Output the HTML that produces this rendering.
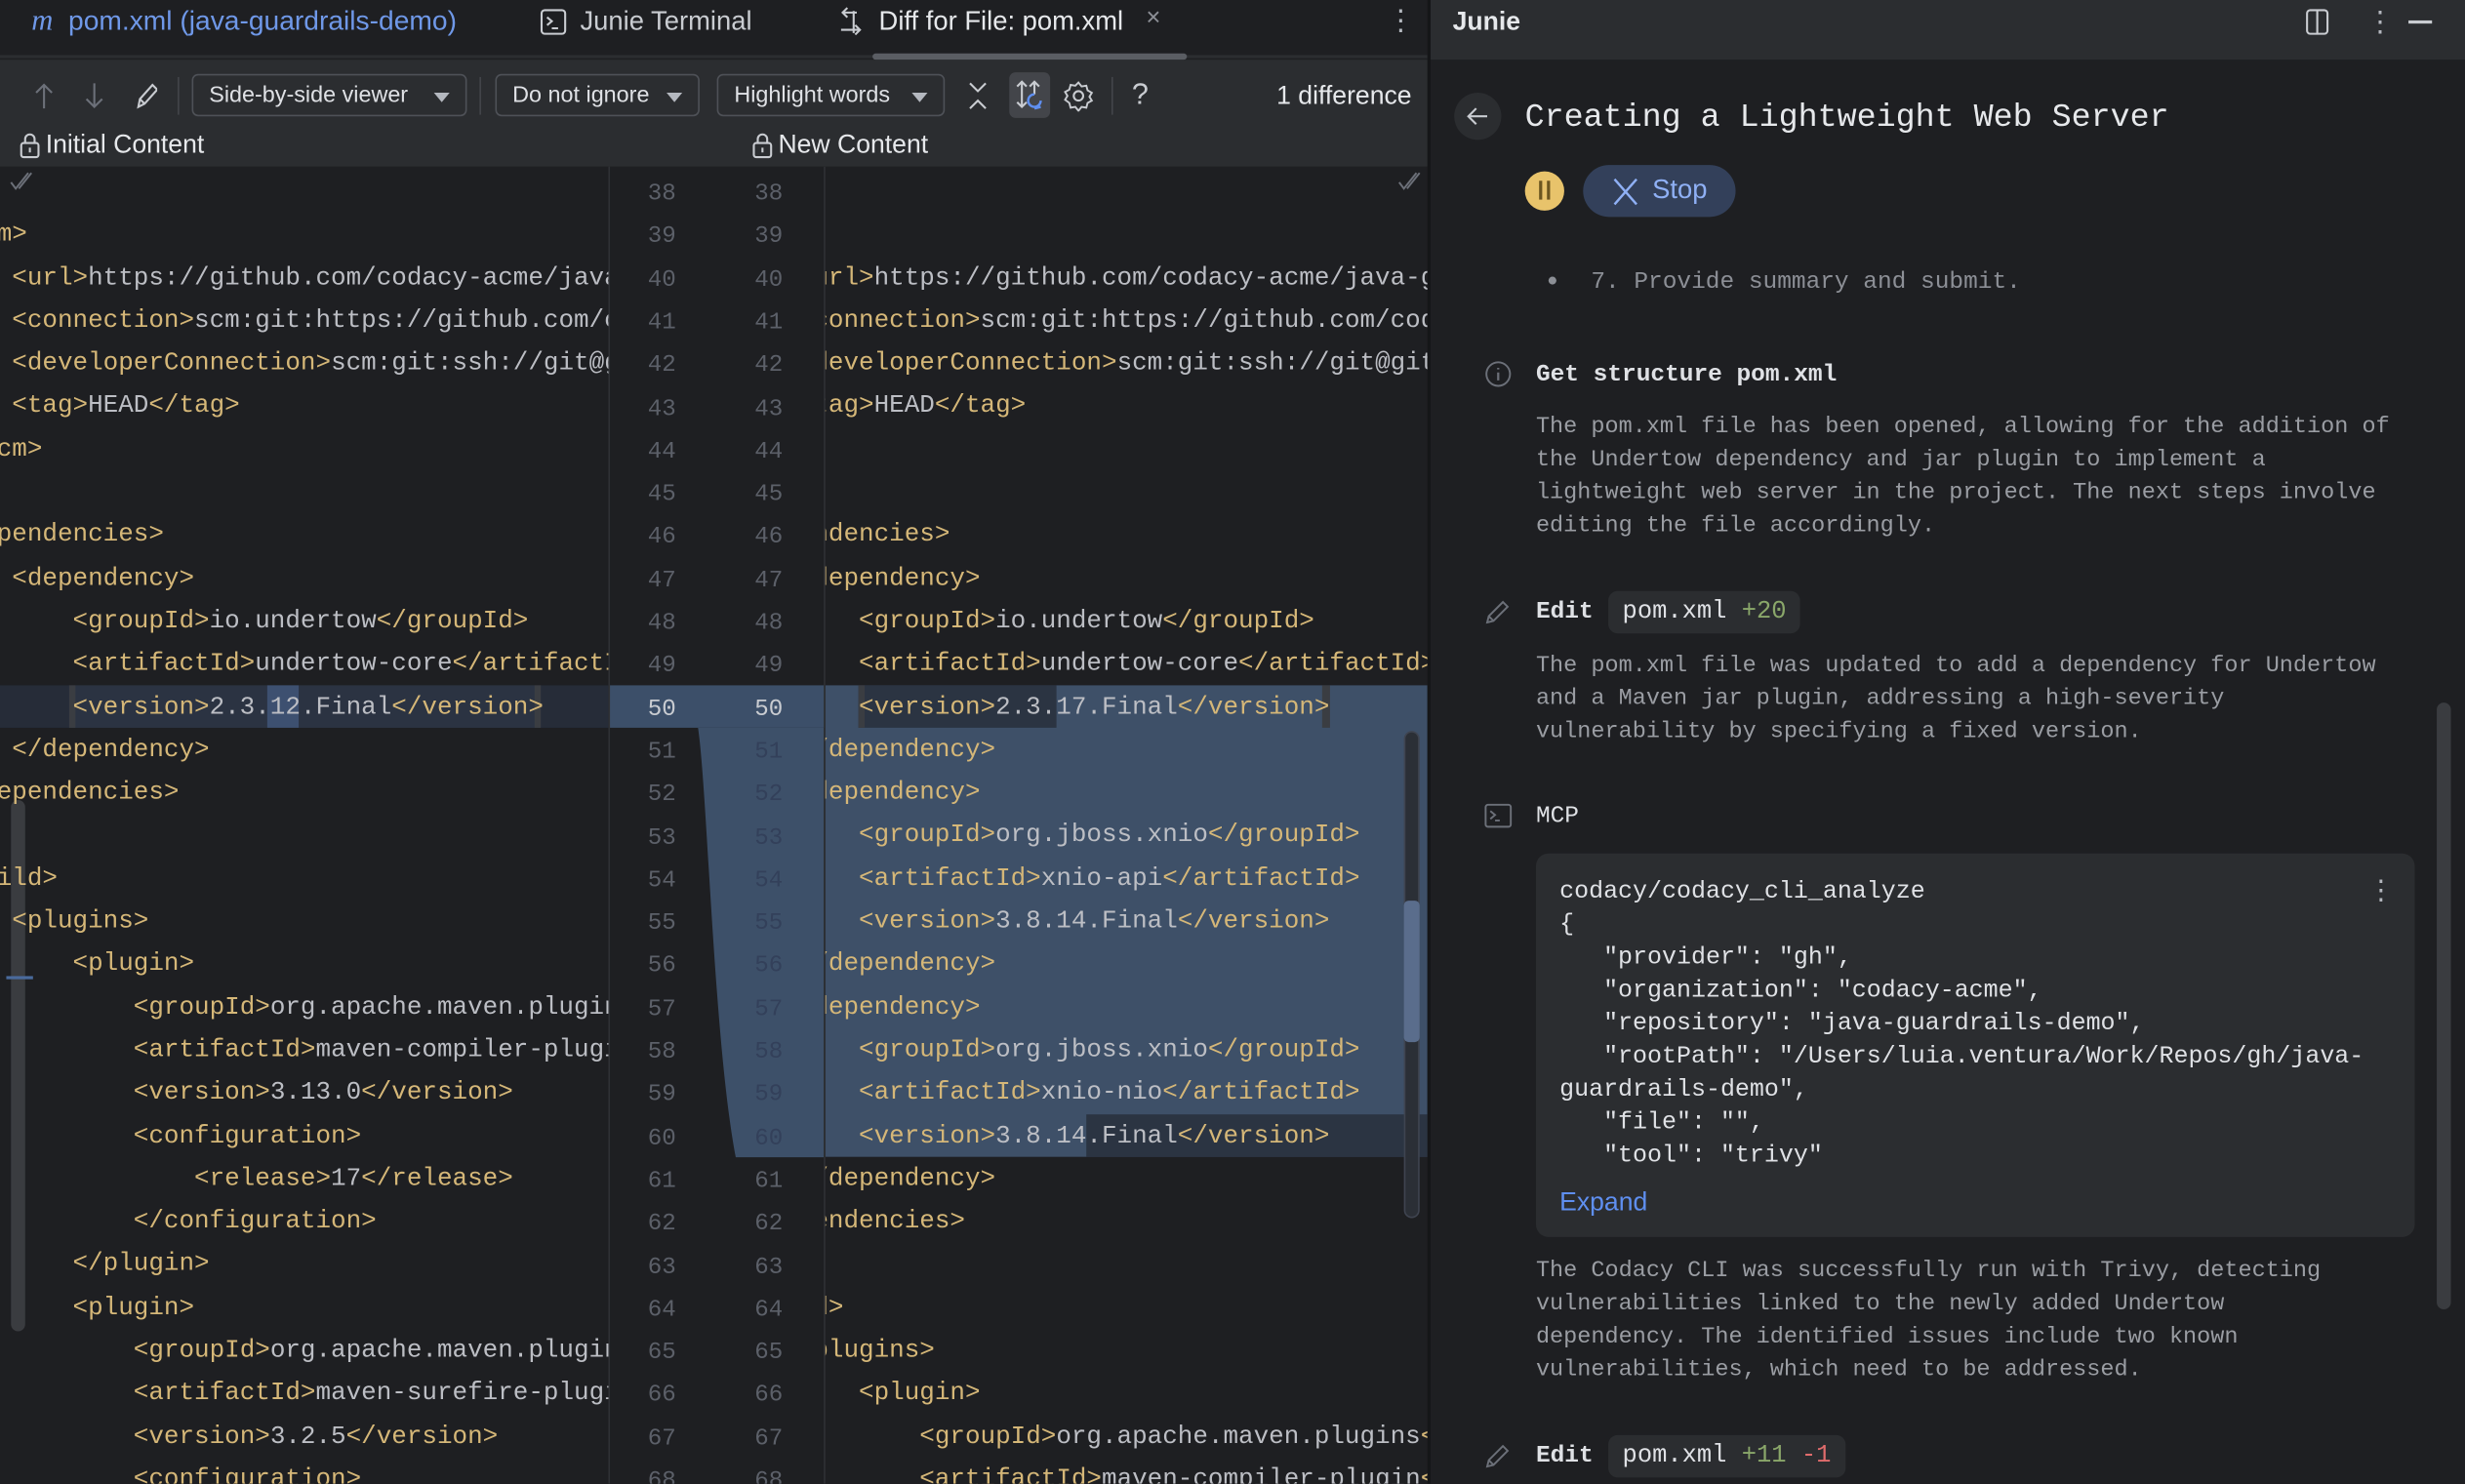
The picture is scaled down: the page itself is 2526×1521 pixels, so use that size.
<!DOCTYPE html>
<html><head><meta charset="utf-8"><style>
*{margin:0;padding:0;box-sizing:border-box}
html,body{width:2526px;height:1520px;overflow:hidden;background:#1e1f22}
#r{position:absolute;left:0;top:0;width:1568px;height:944px;transform:scale(1.6110);transform-origin:0 0;background:#1e1f22;font-family:"Liberation Sans",sans-serif;color:#dfe1e5;overflow:hidden}
.a{position:absolute}
.m{font-family:"Liberation Mono",monospace}
pre{font-family:"Liberation Mono",monospace;font-size:16.1px;line-height:27.3px;color:#bcbec4;position:absolute;white-space:pre}
b{font-weight:normal;color:#d5b778}
.num{position:absolute;font-family:"Liberation Mono",monospace;font-size:15px;line-height:27.3px;color:#5c6069;text-align:center;width:40px}
.dd{position:absolute;top:47px;height:27px;border:1px solid #4e5157;border-radius:4px;font-size:14.5px;line-height:27px;padding-left:10px;color:#dfe1e5}
.dd:after{content:"";position:absolute;right:10px;top:11px;border-left:5px solid transparent;border-right:5px solid transparent;border-top:6px solid #b4b8bf}
.jt{font-family:"Liberation Mono",monospace;font-size:14.6px;color:#9a9da3;line-height:21px;position:absolute;left:977px;white-space:nowrap}
.hd{font-family:"Liberation Mono",monospace;font-size:15.2px;color:#dfe1e5;position:absolute;left:977px;font-weight:bold}
.chip{position:absolute;left:1023px;height:27px;background:#2b2d30;border-radius:6px;font-family:"Liberation Mono",monospace;font-size:15.8px;line-height:27px;padding:0 9px;color:#dfe1e5}
</style></head><body><div id="r">

<!-- tab bar -->
<div class="a" style="left:0;top:0;width:908px;height:38px;background:#1e1f22"></div>
<div class="a" style="left:0;top:35px;width:908px;height:2px;background:#2b2d30"></div>
<div class="a" style="left:555px;top:34px;width:200px;height:4px;background:#5a5d63;border-radius:2px"></div>
<div class="a" style="left:20px;top:3px;font-size:17.5px;color:#6f98e8;white-space:nowrap"><i style="font-family:'Liberation Serif',serif;font-size:19px">m</i>&nbsp;&nbsp;pom.xml (java-guardrails-demo)</div>
<svg class="a" style="left:343px;top:5px" width="18" height="18" viewBox="0 0 18 18"><rect x="1.5" y="1.5" width="15" height="15" rx="2" fill="none" stroke="#c9ccd1" stroke-width="1.3"/><path d="M5 6l3 2.5-3 2.5M8 13h4" fill="none" stroke="#c9ccd1" stroke-width="1.3"/></svg>
<div class="a" style="left:369px;top:4px;font-size:17px;color:#c9ccd1">Junie Terminal</div>
<svg class="a" style="left:531px;top:3px" width="22" height="22" viewBox="0 0 22 22"><path d="M8 2L5 5l3 3M5 5h9M13 13l3 3-3 3M16 16H4M12 4v14" fill="none" stroke="#c9ccd1" stroke-width="1.3"/></svg>
<div class="a" style="left:559px;top:4px;font-size:17px;color:#e6e8eb">Diff for File: pom.xml</div>
<div class="a" style="left:729px;top:3px;font-size:16px;color:#8c8f96">×</div>
<div class="a" style="left:882px;top:4px;font-size:18px;color:#b4b8bf;line-height:18px;width:4px">⋮</div>

<!-- toolbar -->
<div class="a" style="left:0;top:38px;width:908px;height:68px;background:#2b2d30"></div>
<svg class="a" style="left:20px;top:51px" width="80" height="20" viewBox="0 0 80 20"><path d="M8 3v15M3 8l5-5 5 5" fill="none" stroke="#6c7079" stroke-width="1.3"/><path d="M40 2v15M35 12l5 5 5-5" fill="none" stroke="#6c7079" stroke-width="1.3"/><path d="M68 17l1-5 8-9 3 3-8 9z M69 12l3 3" fill="none" stroke="#c9ccd1" stroke-width="1.3"/></svg>
<div class="a" style="left:113px;top:49px;width:1px;height:24px;background:#43454a"></div>
<div class="dd" style="left:122px;width:175px">Side-by-side viewer</div>
<div class="a" style="left:305px;top:49px;width:1px;height:24px;background:#43454a"></div>
<div class="dd" style="left:315px;width:130px">Do not ignore</div>
<div class="dd" style="left:456px;width:145px">Highlight words</div>
<svg class="a" style="left:613px;top:51px" width="18" height="20" viewBox="0 0 18 20"><path d="M4 2l5 5 5-5M4 18l5-5 5 5" fill="none" stroke="#c9ccd1" stroke-width="1.3"/></svg>
<div class="a" style="left:642px;top:46px;width:26px;height:29px;background:#43454a;border-radius:4px"></div>
<svg class="a" style="left:645px;top:49px" width="20" height="24" viewBox="0 0 20 24"><path d="M5 3v16M2 6l3-3 3 3M2 16l3 3 3-3M13 3v8M10 6l3-3 3 3" fill="none" stroke="#c9ccd1" stroke-width="1.3"/><path d="M17 15a4 4 0 1 1-4-4M13 20l4-1" fill="none" stroke="#5f8ff0" stroke-width="1.5"/></svg>
<svg class="a" style="left:676px;top:51px" width="20" height="20" viewBox="0 0 20 20"><circle cx="10" cy="10" r="3" fill="none" stroke="#c9ccd1" stroke-width="1.3"/><path d="M10 1.5l2 2.5 3-.5.8 3 2.7 1.5-1.5 2.5 1.5 2.5-2.7 1.5-.8 3-3-.5-2 2.5-2-2.5-3 .5-.8-3L1.5 12.5 3 10 1.5 7.5l2.7-1.5.8-3 3 .5z" fill="none" stroke="#c9ccd1" stroke-width="1.2"/></svg>
<div class="a" style="left:707px;top:49px;width:1px;height:24px;background:#43454a"></div>
<div class="a" style="left:720px;top:50px;font-size:19px;color:#c9ccd1">?</div>
<div class="a" style="left:812px;top:52px;font-size:16.5px;color:#e6e8eb">1 difference</div>

<!-- header row -->
<svg class="a" style="left:12px;top:84px" width="14" height="17" viewBox="0 0 14 17"><rect x="1.5" y="7" width="11" height="9" rx="1.5" fill="none" stroke="#c9ccd1" stroke-width="1.3"/><path d="M4 7V4.5a3 3 0 0 1 6 0V7M7 10v3" fill="none" stroke="#c9ccd1" stroke-width="1.3"/></svg>
<div class="a" style="left:29px;top:83px;font-size:16.5px;color:#e6e8eb">Initial Content</div>
<svg class="a" style="left:478px;top:84px" width="14" height="17" viewBox="0 0 14 17"><rect x="1.5" y="7" width="11" height="9" rx="1.5" fill="none" stroke="#c9ccd1" stroke-width="1.3"/><path d="M4 7V4.5a3 3 0 0 1 6 0V7M7 10v3" fill="none" stroke="#c9ccd1" stroke-width="1.3"/></svg>
<div class="a" style="left:495px;top:83px;font-size:16.5px;color:#e6e8eb">New Content</div>

<!-- editor areas -->
<div class="a" style="left:0;top:106px;width:908px;height:838px;background:#1e1f22"></div>
<div class="a" style="left:387px;top:106px;width:1px;height:838px;background:#2f3135"></div>
<div class="a" style="left:524px;top:106px;width:1px;height:838px;background:#2f3135"></div>

<!-- left pane -->
<div class="a" style="left:0;top:106px;width:387px;height:838px;overflow:hidden">
 <div class="a" style="left:0;top:330px;width:387px;height:27.3px;background:#262c38"></div>
 <div class="a" style="left:44px;top:330px;width:300px;height:27.3px;background:#2b3342"></div>
 <div class="a" style="left:44px;top:330px;width:4px;height:27.3px;background:#3a3d42"></div>
 <div class="a" style="left:340px;top:330px;width:4px;height:27.3px;background:#3a3d42"></div>
 <div class="a" style="left:170px;top:330px;width:20px;height:27.3px;background:#3d5070"></div>
 <div class="a" style="left:7px;top:403px;width:9px;height:338px;background:#3a3c40;border-radius:5px"></div>
 <div class="a" style="left:4px;top:515px;width:17px;height:2px;background:#4a6a9c"></div>
 <pre style="left:-31px;top:3px">

<b>&lt;scm&gt;</b>
    <b>&lt;url&gt;</b>https://github.com/codacy-acme/java-guardrails-demo<b>&lt;/url&gt;</b>
    <b>&lt;connection&gt;</b>scm:git:https://github.com/codacy-acme<b>&lt;/connection&gt;</b>
    <b>&lt;developerConnection&gt;</b>scm:git:ssh://git@github.com<b>&lt;/developerConnection&gt;</b>
    <b>&lt;tag&gt;</b>HEAD<b>&lt;/tag&gt;</b>
<b>&lt;/scm&gt;</b>

<b>&lt;dependencies&gt;</b>
    <b>&lt;dependency&gt;</b>
        <b>&lt;groupId&gt;</b>io.undertow<b>&lt;/groupId&gt;</b>
        <b>&lt;artifactId&gt;</b>undertow-core<b>&lt;/artifactId&gt;</b>
        <b>&lt;version&gt;</b>2.3.12.Final<b>&lt;/version&gt;</b>
    <b>&lt;/dependency&gt;</b>
<b>&lt;/dependencies&gt;</b>

<b>&lt;build&gt;</b>
    <b>&lt;plugins&gt;</b>
        <b>&lt;plugin&gt;</b>
            <b>&lt;groupId&gt;</b>org.apache.maven.plugins<b>&lt;/groupId&gt;</b>
            <b>&lt;artifactId&gt;</b>maven-compiler-plugin<b>&lt;/artifactId&gt;</b>
            <b>&lt;version&gt;</b>3.13.0<b>&lt;/version&gt;</b>
            <b>&lt;configuration&gt;</b>
                <b>&lt;release&gt;</b>17<b>&lt;/release&gt;</b>
            <b>&lt;/configuration&gt;</b>
        <b>&lt;/plugin&gt;</b>
        <b>&lt;plugin&gt;</b>
            <b>&lt;groupId&gt;</b>org.apache.maven.plugins<b>&lt;/groupId&gt;</b>
            <b>&lt;artifactId&gt;</b>maven-surefire-plugin<b>&lt;/artifactId&gt;</b>
            <b>&lt;version&gt;</b>3.2.5<b>&lt;/version&gt;</b>
            <b>&lt;configuration&gt;</b></pre>
</div>
<svg class="a" style="left:6px;top:109px" width="16" height="14" viewBox="0 0 16 14"><path d="M1 7l3 4 8-10M6 11l8-10" fill="none" stroke="#6c7079" stroke-width="1.2"/></svg>
<svg class="a" style="left:889px;top:109px" width="16" height="14" viewBox="0 0 16 14"><path d="M1 7l3 4 8-10M6 11l8-10" fill="none" stroke="#6c7079" stroke-width="1.2"/></svg>

<!-- gutter -->
<div class="a" style="left:388px;top:436px;width:136px;height:27.3px;background:#3c4f69"></div>
<svg class="a" style="left:388px;top:463px" width="136" height="274" viewBox="0 0 136 274"><path d="M56 0 C62 40 66 200 80 273.3 L136 273.3 L136 0Z" fill="#3d5069"/></svg>
<div class="a" style="left:0;top:110px">
<div class="num" style="left:401px;top:0">38</div><div class="num" style="left:469px;top:0">38</div>
<div class="num" style="left:401px;top:27.3px">39</div><div class="num" style="left:469px;top:27.3px">39</div>
<div class="num" style="left:401px;top:54.6px">40</div><div class="num" style="left:469px;top:54.6px">40</div>
<div class="num" style="left:401px;top:81.9px">41</div><div class="num" style="left:469px;top:81.9px">41</div>
<div class="num" style="left:401px;top:109.2px">42</div><div class="num" style="left:469px;top:109.2px">42</div>
<div class="num" style="left:401px;top:136.5px">43</div><div class="num" style="left:469px;top:136.5px">43</div>
<div class="num" style="left:401px;top:163.8px">44</div><div class="num" style="left:469px;top:163.8px">44</div>
<div class="num" style="left:401px;top:191.1px">45</div><div class="num" style="left:469px;top:191.1px">45</div>
<div class="num" style="left:401px;top:218.4px">46</div><div class="num" style="left:469px;top:218.4px">46</div>
<div class="num" style="left:401px;top:245.7px">47</div><div class="num" style="left:469px;top:245.7px">47</div>
<div class="num" style="left:401px;top:273px">48</div><div class="num" style="left:469px;top:273px">48</div>
<div class="num" style="left:401px;top:300.3px">49</div><div class="num" style="left:469px;top:300.3px">49</div>
<div class="num" style="left:401px;top:327.6px;color:#c9ccd1">50</div><div class="num" style="left:469px;top:327.6px;color:#c9ccd1">50</div>
<div class="num" style="left:401px;top:354.9px">51</div><div class="num" style="left:469px;top:354.9px;color:#33405a">51</div>
<div class="num" style="left:401px;top:382.2px">52</div><div class="num" style="left:469px;top:382.2px;color:#33405a">52</div>
<div class="num" style="left:401px;top:409.5px">53</div><div class="num" style="left:469px;top:409.5px;color:#33405a">53</div>
<div class="num" style="left:401px;top:436.8px">54</div><div class="num" style="left:469px;top:436.8px;color:#33405a">54</div>
<div class="num" style="left:401px;top:464.1px">55</div><div class="num" style="left:469px;top:464.1px;color:#33405a">55</div>
<div class="num" style="left:401px;top:491.4px">56</div><div class="num" style="left:469px;top:491.4px;color:#33405a">56</div>
<div class="num" style="left:401px;top:518.7px">57</div><div class="num" style="left:469px;top:518.7px;color:#33405a">57</div>
<div class="num" style="left:401px;top:546px">58</div><div class="num" style="left:469px;top:546px;color:#33405a">58</div>
<div class="num" style="left:401px;top:573.3px">59</div><div class="num" style="left:469px;top:573.3px;color:#33405a">59</div>
<div class="num" style="left:401px;top:600.6px">60</div><div class="num" style="left:469px;top:600.6px;color:#33405a">60</div>
<div class="num" style="left:401px;top:627.9px">61</div><div class="num" style="left:469px;top:627.9px">61</div>
<div class="num" style="left:401px;top:655.2px">62</div><div class="num" style="left:469px;top:655.2px">62</div>
<div class="num" style="left:401px;top:682.5px">63</div><div class="num" style="left:469px;top:682.5px">63</div>
<div class="num" style="left:401px;top:709.8px">64</div><div class="num" style="left:469px;top:709.8px">64</div>
<div class="num" style="left:401px;top:737.1px">65</div><div class="num" style="left:469px;top:737.1px">65</div>
<div class="num" style="left:401px;top:764.4px">66</div><div class="num" style="left:469px;top:764.4px">66</div>
<div class="num" style="left:401px;top:791.7px">67</div><div class="num" style="left:469px;top:791.7px">67</div>
<div class="num" style="left:401px;top:819px">68</div><div class="num" style="left:469px;top:819px">68</div>
</div>

<!-- right pane -->
<div class="a" style="left:525px;top:106px;width:383px;height:838px;overflow:hidden">
 <div class="a" style="left:0;top:330px;width:383px;height:300.3px;background:#3e5068"></div>
 <div class="a" style="left:21px;top:330px;width:126px;height:27.3px;background:#2b3442"></div>
 <div class="a" style="left:21px;top:330px;width:4px;height:27.3px;background:#3a3d42"></div>
 <div class="a" style="left:316px;top:330px;width:5px;height:27.3px;background:#3a3d42"></div>
 <div class="a" style="left:166px;top:603px;width:217px;height:27.3px;background:#2b3442"></div>
 <pre style="left:-56px;top:3px">


    <b>&lt;url&gt;</b>https://github.com/codacy-acme/java-guardrails-demo<b>&lt;/url&gt;</b>
    <b>&lt;connection&gt;</b>scm:git:https://github.com/codacy-acme<b>&lt;/connection&gt;</b>
    <b>&lt;developerConnection&gt;</b>scm:git:ssh://git@github.com<b>&lt;/developerConnection&gt;</b>
    <b>&lt;tag&gt;</b>HEAD<b>&lt;/tag&gt;</b>


<b>&lt;dependencies&gt;</b>
    <b>&lt;dependency&gt;</b>
        <b>&lt;groupId&gt;</b>io.undertow<b>&lt;/groupId&gt;</b>
        <b>&lt;artifactId&gt;</b>undertow-core<b>&lt;/artifactId&gt;</b>
        <b>&lt;version&gt;</b>2.3.17.Final<b>&lt;/version&gt;</b>
    <b>&lt;/dependency&gt;</b>
    <b>&lt;dependency&gt;</b>
        <b>&lt;groupId&gt;</b>org.jboss.xnio<b>&lt;/groupId&gt;</b>
        <b>&lt;artifactId&gt;</b>xnio-api<b>&lt;/artifactId&gt;</b>
        <b>&lt;version&gt;</b>3.8.14.Final<b>&lt;/version&gt;</b>
    <b>&lt;/dependency&gt;</b>
    <b>&lt;dependency&gt;</b>
        <b>&lt;groupId&gt;</b>org.jboss.xnio<b>&lt;/groupId&gt;</b>
        <b>&lt;artifactId&gt;</b>xnio-nio<b>&lt;/artifactId&gt;</b>
        <b>&lt;version&gt;</b>3.8.14.Final<b>&lt;/version&gt;</b>
    <b>&lt;/dependency&gt;</b>
<b>&lt;/dependencies&gt;</b>

<b>&lt;build&gt;</b>
    <b>&lt;plugins&gt;</b>
        <b>&lt;plugin&gt;</b>
            <b>&lt;groupId&gt;</b>org.apache.maven.plugins<b>&lt;/groupId&gt;</b>
            <b>&lt;artifactId&gt;</b>maven-compiler-plugin<b>&lt;/artifactId&gt;</b></pre>
 <div class="a" style="left:368px;top:359px;width:10px;height:310px;background:#2b2f36;border-radius:5px;border:1px solid #3f4450"></div>
 <div class="a" style="left:368px;top:467px;width:10px;height:90px;background:#5a6d8c;border-radius:3px"></div>
</div>

<!-- divider -->
<div class="a" style="left:908px;top:0;width:2px;height:944px;background:#151618"></div>

<!-- Junie panel -->
<div class="a" style="left:910px;top:0;width:658px;height:38px;background:#2b2d30"></div>
<div class="a" style="left:924px;top:5px;font-size:16.5px;font-weight:bold;color:#e6e8eb">Junie</div>
<svg class="a" style="left:1466px;top:5px" width="16" height="18" viewBox="0 0 16 18"><rect x="1.5" y="1.5" width="13" height="15" rx="2" fill="none" stroke="#c9ccd1" stroke-width="1.3"/><path d="M8 1.5v15" stroke="#c9ccd1" stroke-width="1.3"/></svg>
<div class="a" style="left:1505px;top:4px;font-size:18px;color:#b4b8bf">⋮</div>
<div class="a" style="left:1532px;top:13px;width:15px;height:1.5px;background:#c9ccd1"></div>
<div class="a" style="left:910px;top:38px;width:658px;height:906px;background:#1e1f22"></div>

<div class="a" style="left:925px;top:59px;width:30px;height:30px;border-radius:15px;background:#2b2d30"></div>
<svg class="a" style="left:931px;top:65px" width="18" height="18" viewBox="0 0 18 18"><path d="M15 9H3M8 4L3 9l5 5" fill="none" stroke="#c9ccd1" stroke-width="1.3"/></svg>
<div class="a m" style="left:970px;top:64px;font-size:20.7px;color:#e6e8eb;white-space:nowrap">Creating a Lightweight Web Server</div>
<div class="a" style="left:970px;top:109px;width:25px;height:25px;border-radius:13px;background:#e8c36b"></div>
<div class="a" style="left:979px;top:115px;width:2px;height:12px;background:#6b5520"></div>
<div class="a" style="left:984px;top:115px;width:2px;height:12px;background:#6b5520"></div>
<div class="a" style="left:1007px;top:105px;width:97px;height:33px;border-radius:17px;background:#33405a"></div>
<svg class="a" style="left:1024px;top:112px" width="20" height="20" viewBox="0 0 20 20"><path d="M3 2l14 16M17 2L3 18" stroke="#8fb0f5" stroke-width="1.5"/></svg>
<div class="a" style="left:1051px;top:111px;font-size:17px;color:#8fb0f5">Stop</div>

<div class="a" style="left:985px;top:176px;width:5px;height:5px;border-radius:3px;background:#8c8f96"></div>
<div class="jt" style="left:1012px;top:169px;color:#8c8f96;font-size:15.2px">7. Provide summary and submit.</div>

<svg class="a" style="left:944px;top:229px" width="18" height="18" viewBox="0 0 18 18"><circle cx="9" cy="9" r="7.5" fill="none" stroke="#6c7079" stroke-width="1.2"/><path d="M9 8v5M9 5v1" stroke="#6c7079" stroke-width="1.4"/></svg>
<div class="hd" style="top:229px">Get structure pom.xml</div>
<div class="jt" style="top:262px">The pom.xml file has been opened, allowing for the addition of<br>the Undertow dependency and jar plugin to implement a<br>lightweight web server in the project. The next steps involve<br>editing the file accordingly.</div>

<svg class="a" style="left:944px;top:380px" width="18" height="18" viewBox="0 0 18 18"><path d="M2 16l1-4 9-9 3 3-9 9zM3 12l3 3" fill="none" stroke="#6c7079" stroke-width="1.2"/></svg>
<div class="hd" style="top:380px">Edit</div>
<div class="chip" style="top:376px">pom.xml <span style="color:#8aa76a">+20</span></div>
<div class="jt" style="top:414px">The pom.xml file was updated to add a dependency for Undertow<br>and a Maven jar plugin, addressing a high-severity<br>vulnerability by specifying a fixed version.</div>

<svg class="a" style="left:944px;top:511px" width="18" height="16" viewBox="0 0 18 16"><rect x="1" y="1" width="16" height="14" rx="1.5" fill="none" stroke="#6c7079" stroke-width="1.2"/><path d="M4 5l3 2.5-3 2.5M7 11h3" fill="none" stroke="#6c7079" stroke-width="1.2"/></svg>
<div class="hd" style="top:510px;font-weight:normal">MCP</div>
<div class="a" style="left:977px;top:543px;width:559px;height:244px;background:#2b2d30;border-radius:8px"></div>
<div class="a m" style="left:992px;top:557px;font-size:15.5px;line-height:21px;color:#dfe1e5;white-space:pre">codacy/codacy_cli_analyze
{
   "provider": "gh",
   "organization": "codacy-acme",
   "repository": "java-guardrails-demo",
   "rootPath": "/Users/luia.ventura/Work/Repos/gh/java-
guardrails-demo",
   "file": "",
   "tool": "trivy"</div>
<div class="a" style="left:1506px;top:557px;font-size:17px;color:#b4b8bf">⋮</div>
<div class="a" style="left:992px;top:756px;font-size:16.5px;color:#5f8ff0">Expand</div>
<div class="jt" style="top:799px">The Codacy CLI was successfully run with Trivy, detecting<br>vulnerabilities linked to the newly added Undertow<br>dependency. The identified issues include two known<br>vulnerabilities, which need to be addressed.</div>

<svg class="a" style="left:944px;top:917px" width="18" height="18" viewBox="0 0 18 18"><path d="M2 16l1-4 9-9 3 3-9 9zM3 12l3 3" fill="none" stroke="#6c7079" stroke-width="1.2"/></svg>
<div class="hd" style="top:917px">Edit</div>
<div class="chip" style="top:913px">pom.xml <span style="color:#8aa76a">+11</span> <span style="color:#e06c6c">-1</span></div>

<div class="a" style="left:1550px;top:447px;width:9px;height:386px;background:#3a3c40;border-radius:5px"></div>
</div></body></html>
